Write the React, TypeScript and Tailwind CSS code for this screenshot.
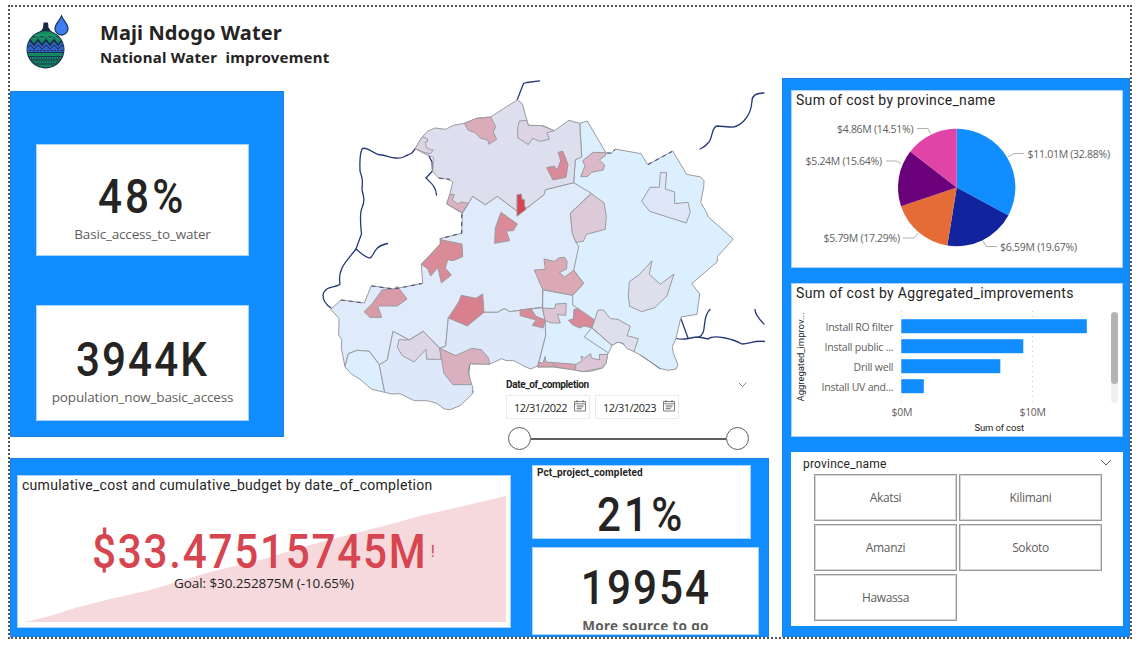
import type { ReactNode } from "react";

const din = "font-['Roboto',sans-serif]";
const sans = "font-['Open_Sans','Noto_Sans',sans-serif]";
const humanist = "font-['Noto_Sans','Open_Sans',sans-serif]";
const figure = "inline-block scale-x-[0.88] font-['Roboto',sans-serif] text-[48px] font-medium whitespace-nowrap";

type Shape = { p: string; f: string };

const provinces: Shape[] = [
  {
    f: "#dcefff",
    p: "579.7,123.3 587.3,121 606,153 611.7,153.3 615,149 641,153.7 647.7,164.7 672.7,151 686.7,174.3 700.7,177 704,180.7 703.7,187.3 700.7,202.3 706.7,212.7 708.3,217 733.3,239 717.3,256.7 717.3,261.7 691.7,283.7 699.7,294 697,314.3 681,317 676,338.3 672.3,346.7 673.3,353 678,365 676,369 668.3,370.3 660.7,368.7 643.3,356.7 628.3,348.3 622.7,343 617.3,342.3 612.3,345.3 607.7,354 606,363.3 602.7,368 591.7,371 583.3,371.7 575,370 553.3,367 537.7,367 545.7,335 545,320 542.5,307.5 542.7,289.7 572.7,250 573.7,182.7 575.3,159.7 581.7,157",
  },
  {
    f: "#dfebfb",
    p: "462.3,213.3 472.7,196.3 485.3,204.7 497.3,196.3 517.3,211.3 525,209.3 530,205.7 544.3,194.3 545.3,189.7 573.7,182.7 591.3,193.3 570.3,213.3 572.7,233.7 576,242.3 578.7,246.7 573.7,270 583.7,283.3 572.7,295.3 542.7,289.7 542.3,307.3 510,311.7 504.3,308.7 497.3,312.3 484,312.3 448.3,317.7 445.7,346 439.7,348.3 423.3,331.3 409.3,340 393,331.3 387.3,360 379.3,364.7 369.3,351.3 357.3,350.3 348.3,353.7 345,366.7 341.3,348.3 341.7,339.3 338.7,335.3 339,318.3 330.7,309.3 341,300 364.3,303 371.3,285.7 393.3,289 422.7,283.3 421.3,264.3 440.3,244 440.3,238.7 461.7,233.3",
  },
  {
    f: "#dddeee",
    p: "415,148.7 421.7,137.7 427.3,131.3 435,128 445.7,129.3 453.3,125.3 464.3,123.3 476.7,118.3 490.7,117 503.3,108.7 517.3,100 522.3,103.7 528.3,125.3 543.3,125.7 554.3,130.7 569,120.3 579.7,123.3 581.7,157 575.3,159.7 573.7,182.7 545.3,189.7 544.3,194.3 530,205.7 525,209.3 517.3,211.3 497.3,196.3 485.3,204.7 472.7,196.3 462.3,213.3 446.7,204 450,193.7 452.7,182 448.3,179 438.7,178.3 432.7,171.3 433.3,157.3 425,154",
  },
  {
    f: "#dcefff",
    p: "345,366.7 348.3,353.7 357.3,350.3 369.3,351.3 379.3,364.7 384.7,392.3 371.7,389.3 360,379.3 351.3,374",
  },
  {
    f: "#dde9fa",
    p: "379.3,364.7 387.3,360 393,331.3 409.3,340 423.3,331.3 439.7,348.3 480,350 468.7,366 468,376.7 472.7,386.7 472.3,394 460,405.7 450,409.7 444.3,409 436.7,403.3 427.3,400.7 414.3,400.7 400,393.7 391.7,394 384.7,392.3",
  },
  {
    f: "#dde9fa",
    p: "448.3,317.7 484,312.3 497.3,312.3 504.3,308.7 510,311.7 542.3,307.3 545,320 545.7,335 537.7,366 530.7,369 525,366.7 514,360.7 506,360.5 501.7,358.7 490,364 472.7,364 439.7,348.3 445.7,346",
  },
];

const northWest: Shape[] = [
  { f: "#dcabba", p: "463,160 500,145 542,141 557,170 550,187 560,208 537,223 533,210 512,205 494,187 475,181" },
  { f: "#dcd3e4", p: "315,236 335,203 340,201 353,207 352,215 346,217 349,232 361,239 370,240 361,251 345,248" },
  { f: "#dcb2c3", p: "420,372 433,374 427,390 443,402 455,396 474,400 457,429 443,420 410,402" },
  { f: "#d64550", p: "621,374 634,372 636,387 644,390 643,404 648,418 621,439" },
  { f: "#d98b98", p: "573,427 622,462 610,482 589,483 599,512 554,520 556,474" },
];

const northEast: Shape[] = [
  { f: "#dcd3e4", p: "-32,153 -10,151 -5,166 35,167 73,182 51,188 58,208 30,214 8,205 -5,224 -37,203 -37,175" },
  { f: "#d98998", p: "85,247 98,243 114,283 108,322 69,330 50,293 73,288 81,300 92,273" },
  { f: "#dcb8c8", p: "189,247 225,248 228,255 208,270 224,285 220,300 185,307 172,320 152,320 165,288 158,272" },
  { f: "#dccad8", p: "184,371 222,398 229,440 226,478 170,493 160,514 138,517 127,491 121,430" },
  { f: "#dde7f7", p: "391,308 410,308 406,357 434,366 434,401 474,397 481,425 469,459 359,424 335,394 360,352 388,352" },
];

const southWest: Shape[] = [
  { f: "#d98b98", p: "391,-6 391,-1 456,12 458,50 430,62 413,59 406,84 424,105 394,129 384,83 362,108 353,86 334,73 391,12" },
  { f: "#d99ba8", p: "217,149 250,147 262,139 291,177 262,198 203,198 215,232 180,232 162,215 186,192" },
  { f: "#d8808d", p: "454,166 498,175 518,162 522,217 472,258 415,234 446,186" },
  { f: "#dcd6e6", p: "267,299 298,300 340,274 389,325 394,358 350,358 348,328 312,366 277,347 262,322" },
  { f: "#dab0be", p: "389,325 437,347 485,325 514,329 534,352 540,373 480,371 474,395 485,434 429,434 402,400" },
  { f: "#d98b98", p: "630,210 663,206 678,229 706,240 699,264 667,256 678,240 631,227" },
];

const southEast: Shape[] = [
  { f: "#dba8b5", p: "42,57 73,64 88,53 104,52 111,64 110,87 88,98 104,111 131,91 161,130 128,166 38,149 13,90 46,88" },
  { f: "#dcc4d3", p: "38,204 74,206 77,192 109,190 107,226 82,224 91,249 64,249 45,241" },
  { f: "#d98998", p: "132,208 145,206 194,240 184,263 162,258 149,264 127,254 115,241 130,237" },
  { f: "#dddfed", p: "204,210 220,210 241,236 264,238 301,259 291,287 325,296 312,335 290,325 278,309 262,307 246,316 186,264 194,240" },
  { f: "#dddfed", p: "366,62 358,103 391,133 432,102 411,168 374,203 335,215 299,199 295,168 298,125 328,104" },
  { f: "#dba0ad", p: "23,381 26,366 38,370 46,349 47,366 73,368 138,373 135,390 70,380" },
  { f: "#dcc6d5", p: "138,373 157,362 153,348 164,354 182,341 184,354 209,360 208,344 233,343 228,370 215,384 160,395 135,390" },
];

const outline = "stroke-[#9b9b9f] [stroke-linejoin:round]";

function Regions({ at, shapes }: { at: string; shapes: Shape[] }) {
  return (
    <g transform={`translate(${at}) scale(0.3333)`}>
      {shapes.map((s) => (
        <polygon key={s.p} points={s.p} fill={s.f} className={outline} strokeWidth={3} />
      ))}
    </g>
  );
}

function ProvinceMap() {
  return (
    <svg viewBox="284 7 486 451" className="block h-[451px] w-[486px] [grid-area:1/1]">
      <g fill="none" stroke="#263878" strokeWidth={1.3} strokeLinecap="round">
        <path d="M517.3 99.5 L523.5 83.5 L527 82.5 L539.5 80.8" />
        <path d="M764 93 C756 93 752 95 752 101 C751 118 739 128 730 127 L717 126 C711 127 713 139 708 143 Q705 147 700 149" />
        <path d="M415 149 L412 153 L408 155 C404 156 403 159 396 158 C388 158 389 155 378 154.500 C372 152 365 146 362 149 C359 156 360 165 360 171 C362 178 363 178 362 190 C364 198 365 200 362 208 C359 214 361 228 361.500 234 L356 249 C348 260 337 268 340 284 C337 288 325 285 323 295 C323 302 328 306 331 308" />
        <path d="M356 249 Q366 258 370 258 C374 257 373 246 387.500 243.500" />
        <path d="M428 154 L432 162 L432.500 171 L426 178 C432 184 436 187 436.500 195" />
        <path d="M676.500 338.500 C685 341 690 337 699 337 L708 339 C714 334 733 339 742 344 C750 344 754 340 764.500 341.500" />
        <path d="M681 319 L688 338 M699 337 C708 333 701 317 710 309.500 M755 309.500 Q755 315 764 324" />
        <path d="M622 343 L634 351 M640 354.500 L651 362 L660 368.500 M470 363.500 Q466 377 473 392" />
      </g>
      {provinces.map((s) => (
        <polygon key={s.p} points={s.p} fill={s.f} className={outline} strokeWidth={1} />
      ))}
      <Regions at="310 70" shapes={northWest} />
      <Regions at="530 70" shapes={northEast} />
      <Regions at="310 240" shapes={southWest} />
      <Regions at="530 240" shapes={southEast} />
      <g fill="none" strokeWidth={1} className={outline}>
        <path d="M542.700 289.700 V307.500 L530 309 M572.700 295.300 V305 L580 310" />
        <path d="M591.500 328 L584.300 337 L607.700 352.500 M592 328 L612 345.500" />
        <path d="M553.300 362.700 L554.500 366.500" />
      </g>
      <g fill="none" stroke="#4a4f78" strokeWidth={1.1} strokeDasharray="4 4">
        <path d="M341 300 L364 303 M371.500 286 L394 289 L422 283.500 M439 178 L450 179.500 M461.700 214 V233 L441 238.500" />
        <path d="M607 153 L612 153 L615 149.500 M648 164.500 L672 151.500" />
      </g>
    </svg>
  );
}

function Gourd() {
  return (
    <svg viewBox="0 0 56 64" className="h-16 w-14 shrink-0">
      <defs>
        <clipPath id="bowl">
          <circle cx="25.500" cy="39.300" r="18" />
        </clipPath>
      </defs>
      <path d="M23.500 12.500 H28 L28.500 17.500 Q30 21 34 23 L17 23 Q22 21 23 17.500Z" fill="#1a2746" />
      <circle cx="25.500" cy="39.500" r="19" fill="#1d2d50" />
      <g clipPath="url(#bowl)">
        <rect x="6" y="20" width="40" height="40" fill="#15895f" />
        <rect x="6" y="33" width="40" height="9.500" fill="#2f62c4" />
        <g fill="none" stroke="#1b2f55" strokeWidth="1">
          <path d="M6 27 H46 M6 42.500 H46 M6 46.500 H46 M6 50 H46 M6 54 H46" />
          <path d="M6 40.500 H46" strokeDasharray="2 1.500" />
          <path d="M6 48.300 H46 M6 52 H46" strokeDasharray="1 1.500" />
          <path d="M6 35 L10 30 L14 35 L18 30 L22 35 L26 30 L30 35 L34 30 L38 35 L42 30 L46 35" strokeWidth="1.800" />
          <path d="M6 39 L10 35 L14 39 L18 35 L22 39 L26 35 L30 39 L34 35 L38 39 L42 35 L46 39" />
        </g>
        <path d="M12 25 H39 M14 29 L18 26 L22 29 L26 26 L30 29 L34 26 L38 29" fill="none" stroke="#27a36e" strokeWidth="1" />
      </g>
      <path d="M41.500 6 C43 10 48 14 48 18.500 A6.500 6.500 0 0 1 35 18.500 C35 14 40 10 41.500 6Z" fill="#3d7df0" stroke="#1c3768" strokeWidth="1.300" />
    </svg>
  );
}

function Kpi({ value, label, className, spacing }: { value: string; label: string; className: string; spacing: string }) {
  return (
    <div className={`flex flex-col items-center border border-[#a8d4ff] bg-white ${className}`}>
      <div className={`${figure} ${spacing} leading-[56px] text-[#252423]`}>{value}</div>
      <div className={`${sans} -mt-px text-[13.500px] leading-5 tracking-[-0.170px] text-[#605e5c]`}>{label}</div>
    </div>
  );
}

function Chevron({ className }: { className: string }) {
  return (
    <svg viewBox="0 0 12 8" className={className} fill="none" stroke="#605e5c" strokeWidth="1">
      <path d="M1 1 L6 6 L11 1" />
    </svg>
  );
}

function DateBox({ value }: { value: string }) {
  return (
    <div className="flex h-6 w-[84px] items-center justify-between border border-[#eaeaea] bg-white pr-[3px] pl-[7px]">
      <span className={`${sans} pt-[2px] text-[11px] tracking-[-0.550px] text-[#252423]`}>{value}</span>
      <svg viewBox="0 0 12 12" className="mb-[2px] size-3" fill="none" stroke="#605e5c" strokeWidth="0.800">
        <path d="M.5 1.500 H11.500 V11 H.5Z M.5 3.800 H11.500 M3 0 V2.500 M9 0 V2.500" />
        <path d="M2.500 6 H10 M2.500 8.500 H8 M4 5 V10 M6 5 V10 M8 5 V8" strokeWidth="0.600" />
      </svg>
    </div>
  );
}

function DateSlicer() {
  return (
    <div className="z-10 mb-[5px] ml-[222px] h-[76px] w-[250px] self-end [grid-area:1/1]">
      <div className="flex items-center justify-between pr-[9px]">
        <span className={`${din} pt-px text-[10px] leading-[14px] font-bold tracking-[-0.360px] text-[#252423]`}>Date_of_completion</span>
        <Chevron className="h-[6px] w-[9px]" />
      </div>
      <div className="mt-[3px] flex gap-[5px]">
        <DateBox value="12/31/2022" />
        <DateBox value="12/31/2023" />
      </div>
      <div className="mt-[8px] flex items-center pl-[2px]">
        <span className="size-[23px] rounded-full border-[1.500px] border-[#605e5c] bg-white" />
        <span className="h-[2px] w-[195px] bg-[#605e5c]" />
        <span className="size-[23px] rounded-full border-[1.500px] border-[#605e5c] bg-white" />
      </div>
    </div>
  );
}

function ChartCard({ title, spacing, className, children }: { title: string; spacing: string; className: string; children: ReactNode }) {
  return (
    <section className={`flex flex-col border border-[#a8d4ff] bg-white ${className}`}>
      <h2 className={`${din} ${spacing} pl-1 text-[14px] leading-[18px] whitespace-nowrap text-[#252423]`}>{title}</h2>
      {children}
    </section>
  );
}

const slices = [
  { share: 32.88, fill: "#118dff" },
  { share: 19.67, fill: "#12239e" },
  { share: 17.29, fill: "#e66c37" },
  { share: 15.64, fill: "#6b007b" },
  { share: 14.51, fill: "#e044a7" },
];

function Pie() {
  let turn = 0;
  const at = (t: number) => {
    const a = (t / 99.99) * Math.PI * 2;
    return `${956.7 + 58.7 * Math.sin(a)} ${187.5 - 58.7 * Math.cos(a)}`;
  };
  const labels = [
    { x: 1027.5, y: 158, t: "$11.01M (32.88%)", w: 82.5 },
    { x: 1000, y: 251, t: "$6.59M (19.67%)", w: 77 },
    { x: 823.5, y: 242, t: "$5.79M (17.29%)", w: 76.5 },
    { x: 805.5, y: 165, t: "$5.24M (15.64%)", w: 76.5 },
    { x: 837, y: 133, t: "$4.86M (14.51%)", w: 76.5 },
  ];
  return (
    <svg viewBox="792 109 330 158" className="block h-[158px] w-[330px]">
      {slices.map((s) => {
        const from = at(turn);
        turn += s.share;
        return <path key={s.fill} d={`M956.7 187.5 L${from} A58.7 58.7 0 0 1 ${at(turn)}Z`} fill={s.fill} />;
      })}
      <g fill="none" stroke="#b3b0ad" strokeWidth="1">
        <path d="M1008 157 L1014 153.500 H1024 M983 241 L986 246.500 H997 M918 233 L914 238 H903 M901 163.500 L896 161 H886 M930.500 133.500 L928 128.500 H917" />
      </g>
      <g className={sans} fontSize="10.500" fill="#605e5c">
        {labels.map((l) => (
          <text key={l.t} x={l.x} y={l.y} textLength={l.w}>{l.t}</text>
        ))}
      </g>
    </svg>
  );
}

const bars = [
  { label: "Install RO filter", x: 825.5, w: 185.5 },
  { label: "Install public ...", x: 824.5, w: 122 },
  { label: "Drill well", x: 853.5, w: 99 },
  { label: "Install UV and...", x: 821.5, w: 22.5 },
];

function Bars() {
  return (
    <svg viewBox="792 302 330 134" className="block h-[134px] w-[330px]">
      <path d="M901.500 311 V405 M1032.500 311 V405" stroke="#c8c6c4" strokeDasharray="1 4" />
      <g className={sans} fontSize="10.500" fill="#605e5c">
        {bars.map((b, i) => (
          <g key={b.label}>
            <rect x="901.300" y={319.2 + i * 20} width={b.w} height="14" fill="#118dff" />
            <text x={b.x} y={331 + i * 20} textLength={893.5 - b.x}>{b.label}</text>
          </g>
        ))}
        <text x="891.500" y="416" textLength="21">$0M</text>
        <text x="1019.500" y="416" textLength="26.500">$10M</text>
      </g>
      <g className={din} fontSize="9.500" fill="#252423">
        <text x="974.500" y="431" textLength="49.500">Sum of cost</text>
        <text transform="translate(803.500 401.500) rotate(-90)" textLength="89">Aggregated_improv...</text>
      </g>
      <rect x="1111" y="312" width="7" height="91" rx="3.500" fill="#f0f0f0" />
      <rect x="1111" y="312" width="7" height="72" rx="3.500" fill="#b3b3b3" />
    </svg>
  );
}

function SlicerTile({ name }: { name: string }) {
  return (
    <button className={`${sans} flex h-[47px] items-center justify-center border border-[#999] bg-white text-[12px] tracking-[-0.350px] text-[#605e5c] outline-1 -outline-offset-2 outline-[#d6d6d6]`}>{name}</button>
  );
}

export default function App() {
  return (
    <div className="h-[646px] w-[1145px] overflow-hidden bg-white pt-[5px] pl-2">
      <div className="flex h-[634px] w-[1124px] items-start border-2 border-dotted border-[#555]">
        <main className="w-[759px] shrink-0">
          <div className="flex h-[451px]">
            <div className="w-[274px] shrink-0">
              <header className="flex h-[84px] items-start pt-[3px] pl-[10px] whitespace-nowrap text-[#252423]">
                <Gourd />
                <div className={`${humanist} ml-[24px] pt-2 font-bold`}>
                  <h1 className="text-[20px] leading-[29px] tracking-[0.100px]">Maji Ndogo Water</h1>
                  <p className="text-[15px] leading-[21px] tracking-[0.230px] whitespace-pre">National Water  improvement</p>
                </div>
              </header>
              <aside className="flex h-[346px] w-[274px] flex-col items-center gap-[49px] border border-[#1b80df] bg-[#118dff] pt-[52px] pr-[9px]">
                <Kpi value="48%" label="Basic_access_to_water" className="h-[112px] w-[213px] pt-[24px]" spacing="tracking-[3.500px]" />
                <Kpi value="3944K" label="population_now_basic_access" className="h-[116px] w-[213px] pt-[26px]" spacing="tracking-[2.300px]" />
              </aside>
            </div>
            <div className="grid w-[486px] shrink-0">
              <ProvinceMap />
              <DateSlicer />
            </div>
          </div>
          <div className="flex h-[179px] items-start gap-[21px] border border-[#1b80df] bg-[#118dff] pl-[6px]">
            <ChartCard title="cumulative_cost and cumulative_budget by date_of_completion" spacing="tracking-[0.280px]" className="mt-4 h-[153px] w-[494px] shrink-0">
              <div className="grid h-[133px]">
                <svg viewBox="18 495 492 133" className="h-[133px] w-[492px] [grid-area:1/1]">
                  <path d="M25 623 L50 617 L75 609 L110 600 L150 591 L210 573 L260 561 L310 546 L360 533 L395 524 L420 517 L455 509 L506 497 V623Z" fill="#f6d9dc" />
                </svg>
                <div className="flex flex-col items-center pt-9 [grid-area:1/1]">
                  <div className="mr-6 flex items-center text-[#d64550]">
                    <span className={`${figure} -mr-[20px] leading-[44px] tracking-[2px]`}>$33.47515745M</span>
                    <span className={`${din} text-[16px] leading-5`}>!</span>
                  </div>
                  <div className={`${sans} -mt-px text-[13.500px] leading-5 tracking-[-0.100px] text-[#252423]`}>Goal: $30.252875M (-10.65%)</div>
                </div>
              </div>
            </ChartCard>
            <div className="flex flex-col gap-2 pt-[6px]">
              <div className="h-[74px] w-[219px] border border-[#a8d4ff] bg-white">
                <h2 className={`${din} pl-1 text-[10px] leading-[14px] font-bold tracking-[0.140px] text-[#252423]`}>Pct_project_completed</h2>
                <div className="mt-[7px] flex justify-center text-[#252423]">
                  <span className={`${figure} leading-[56px] tracking-[3.500px]`}>21%</span>
                </div>
              </div>
              <div className="flex h-[88px] w-[227px] flex-col items-center overflow-hidden border border-[#a8d4ff] bg-white pt-[12px]">
                <div className={`${figure} leading-[56px] tracking-[2.300px] text-[#252423]`}>19954</div>
                <div className={`${humanist} mt-px h-[13px] overflow-hidden text-[13.500px] leading-[18px] font-bold tracking-[0.280px] text-[#605e5c]`}>More source to go</div>
              </div>
            </div>
          </div>
        </main>

        <aside className="mt-[71px] ml-[13px] flex h-[559px] w-[348px] shrink-0 flex-col gap-[15px] border border-[#1b80df] bg-[#118dff] pt-[11px] pl-2">
          <ChartCard title="Sum of cost by province_name" spacing="tracking-[0.300px]" className="h-[178px] w-[332px]">
            <Pie />
          </ChartCard>
          <ChartCard title="Sum of cost by Aggregated_improvements" spacing="tracking-[0.350px]" className="h-[154px] w-[332px]">
            <Bars />
          </ChartCard>
          <section className="h-[174px] w-[332px] bg-white">
            <div className="flex h-[22px] items-center justify-between pr-[11px] pl-3">
              <h2 className={`${din} pt-[2px] text-[12px] leading-4 tracking-[0.200px] text-[#252423]`}>province_name</h2>
              <Chevron className="h-[8px] w-[12px]" />
            </div>
            <div className="ml-[23px] grid w-[288px] grid-cols-2 gap-x-[2px] gap-y-[3px]">
              {["Akatsi", "Kilimani", "Amanzi", "Sokoto", "Hawassa"].map((n) => (
                <SlicerTile key={n} name={n} />
              ))}
            </div>
          </section>
        </aside>
      </div>
    </div>
  );
}
